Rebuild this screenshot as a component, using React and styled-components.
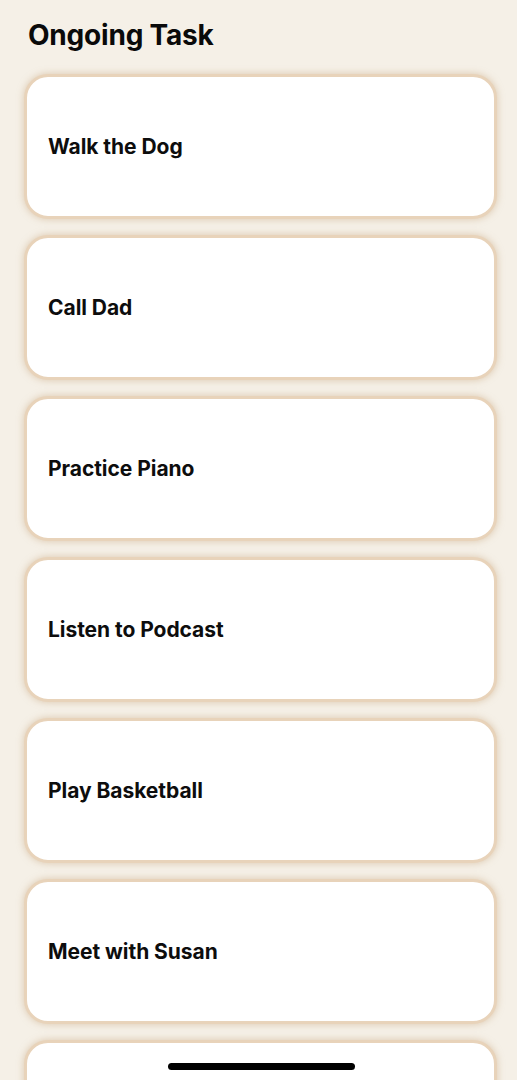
import React from "react";
import styled, { createGlobalStyle } from "styled-components";

const Global = createGlobalStyle`
  html, body { margin: 0; padding: 0; background: #f5f0e7; }
  body { font-family: Inter, "Noto Sans", "Liberation Sans", sans-serif; -webkit-font-smoothing: antialiased; }
`;

const Screen = styled.div`
  height: 1080px;
  overflow: hidden;
  position: relative;
  background: #f5f0e7;
  padding: 14px 20px 0 24px;
  box-sizing: border-box;
`;

const Title = styled.h1`
  margin: 0 0 0 4px;
  font-size: 28px;
  line-height: 42px;
  font-weight: 700;
  color: #0a0a0a;
  letter-spacing: -0.2px;
`;

const List = styled.div`
  display: flex;
  flex-direction: column;
  gap: 16px;
  margin-top: 18px;
`;

const Card = styled.div`
  height: 145px;
  box-sizing: border-box;
  background: #ffffff;
  border: 3px solid #e8d3ba;
  border-radius: 24px;
  box-shadow: 0 0 6px 1px rgba(205, 175, 140, 0.5);
  display: flex;
  align-items: center;
  padding: 0 21px;
`;

const CardLabel = styled.span`
  font-size: 21px;
  font-weight: 700;
  color: #0d0d0d;
  letter-spacing: -0.05px;
`;

const HomeIndicator = styled.div`
  position: absolute;
  left: 168px;
  bottom: 10px;
  width: 187px;
  height: 7px;
  border-radius: 4px;
  background: #000;
`;

const tasks = [
  "Walk the Dog",
  "Call Dad",
  "Practice Piano",
  "Listen to Podcast",
  "Play Basketball",
  "Meet with Susan",
  "",
];

export default function App() {
  return (
    <>
      <Global />
      <Screen>
        <Title>Ongoing Task</Title>
        <List>
          {tasks.map((t, i) => (
            <Card key={i}>
              <CardLabel>{t}</CardLabel>
            </Card>
          ))}
        </List>
        <HomeIndicator />
      </Screen>
    </>
  );
}
